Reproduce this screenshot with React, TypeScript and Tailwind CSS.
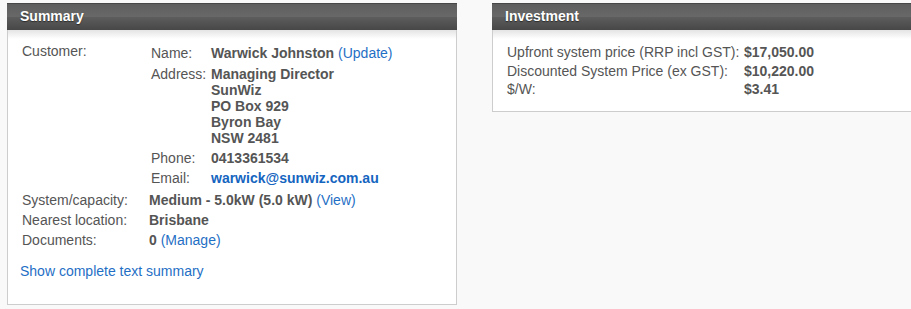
import React from "react";

const link = "text-[#1f6fc5]";

function PanelHeader({ title }: { title: string }) {
  return (
    <div className="relative h-[27px] border-t border-[#474747] bg-[linear-gradient(to_bottom,#5e5e5e_0%,#686868_48%,#5c5c5c_52%,#474747_100%)] pl-[13px] text-[14px] font-bold leading-[25px] text-white [text-shadow:0_1px_1px_rgba(0,0,0,0.5)]">
      {title}
    </div>
  );
}

export default function App() {
  const sub: [string, React.ReactNode][] = [
    [
      "Name:",
      <>
        Warwick Johnston <span className={`font-normal ${link}`}>(Update)</span>
      </>,
    ],
    [
      "Address:",
      <>
        Managing Director
        <br />
        SunWiz
        <br />
        PO Box 929
        <br />
        Byron Bay
        <br />
        NSW 2481
      </>,
    ],
    ["Phone:", "0413361534"],
    ["Email:", <span className="text-[#1565c0]">warwick@sunwiz.com.au</span>],
  ];

  return (
    <div className="min-h-screen overflow-hidden bg-[#f9f9f9] font-['Liberation_Sans',Arial,sans-serif] text-[14px] leading-[16px] text-[#555]">
      <div className="flex items-start gap-[35px] pl-[7px] pt-[3px]">
        <div className="w-[450px] shrink-0">
          <PanelHeader title="Summary" />
          <div className="border-x border-b border-[#cdcdcd] bg-[linear-gradient(to_bottom,#e4e4e4_0px,#ffffff_9px)] px-[12px] pb-[25px] pt-[11px]">
            <table className="border-separate border-spacing-0">
              <tbody>
                <tr>
                  <td className="w-[127px] p-[2px] align-top">Customer:</td>
                  <td className="p-[2px] align-top">
                    <table className="border-separate border-spacing-0">
                      <tbody>
                        {sub.map(([k, v], i) => (
                          <tr key={k}>
                            <td className={`w-[60px] p-[2px] align-top ${i === 1 ? "pt-[3px]" : ""}`}>{k}</td>
                            <td className={`p-[2px] align-top font-bold ${i === 1 ? "pt-[3px]" : ""}`}>{v}</td>
                          </tr>
                        ))}
                      </tbody>
                    </table>
                  </td>
                </tr>
                <tr>
                  <td className="p-[2px] align-top">System/capacity:</td>
                  <td className="p-[2px] align-top font-bold">
                    Medium - 5.0kW (5.0 kW) <span className={`font-normal ${link}`}>(View)</span>
                  </td>
                </tr>
                <tr>
                  <td className="p-[2px] align-top">Nearest location:</td>
                  <td className="p-[2px] align-top font-bold">Brisbane</td>
                </tr>
                <tr>
                  <td className="p-[2px] align-top">Documents:</td>
                  <td className="p-[2px] align-top font-bold">
                    0 <span className={`font-normal ${link}`}>(Manage)</span>
                  </td>
                </tr>
              </tbody>
            </table>
            <a className={`mt-[13px] block ${link}`}>Show complete text summary</a>
          </div>
        </div>

        <div className="w-[440px] shrink-0">
          <PanelHeader title="Investment" />
          <div className="border-x border-b border-[#cdcdcd] bg-[linear-gradient(to_bottom,#e4e4e4_0px,#ffffff_9px)] px-[14px] pb-[14px] pt-[14px]">
            <div className="grid grid-cols-[237px_auto] gap-y-[2.5px] leading-[16px]">
              <span>Upfront system price (RRP incl GST):</span>
              <span className="font-bold">$17,050.00</span>
              <span>Discounted System Price (ex GST):</span>
              <span className="font-bold">$10,220.00</span>
              <span>$/W:</span>
              <span className="font-bold">$3.41</span>
            </div>
          </div>
        </div>
      </div>
    </div>
  );
}
